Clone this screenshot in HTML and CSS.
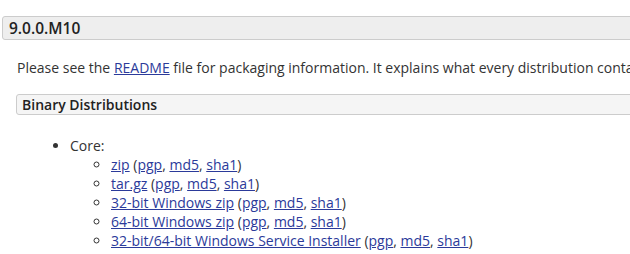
FILE: index.html
```html
<!DOCTYPE html>
<html lang="en">
<head>
    <meta charset="UTF-8">
    <meta name="viewport" content="width=device-width, initial-scale=1.0">
    <title>Apache Tomcat 9 Downloads</title>
    <link rel="stylesheet" href="styles.css">
</head>
<body>
    <div class="page">
        <h3 class="release">9.0.0.M10</h3>
        <div class="release-body">
            <p>Please see the <a href="#">README</a> file for packaging information. It explains what every distribution contains.</p>

            <h4 class="dist-title">Binary Distributions</h4>
            <ul class="dist-list">
                <li>Core:
                    <ul>
                        <li><a href="#">zip</a> (<a href="#">pgp</a>, <a href="#">md5</a>, <a href="#">sha1</a>)</li>
                        <li><a href="#">tar.gz</a> (<a href="#">pgp</a>, <a href="#">md5</a>, <a href="#">sha1</a>)</li>
                        <li><a href="#">32-bit Windows zip</a> (<a href="#">pgp</a>, <a href="#">md5</a>, <a href="#">sha1</a>)</li>
                        <li><a href="#">64-bit Windows zip</a> (<a href="#">pgp</a>, <a href="#">md5</a>, <a href="#">sha1</a>)</li>
                        <li><a href="#">32-bit/64-bit Windows Service Installer</a> (<a href="#">pgp</a>, <a href="#">md5</a>, <a href="#">sha1</a>)</li>
                    </ul>
                </li>
                <li>Full documentation:
                    <ul>
                        <li><a href="#">tar.gz</a> (<a href="#">pgp</a>, <a href="#">md5</a>, <a href="#">sha1</a>)</li>
                    </ul>
                </li>
            </ul>
        </div>
    </div>
</body>
</html>
```

FILE: styles.css
```css
html, body {
    overflow: hidden;
}
body {
    margin: 0;
    font-family: "Open Sans", sans-serif;
    font-size: 14px;
    color: #333;
    background: #fff;
}
a {
    color: #2b3a9a;
    text-decoration: underline;
}
.page {
    width: 1000px;
    padding: 16px 0 0 2px;
}
.release {
    margin: 0;
    height: 22px;
    line-height: 22px;
    padding: 0 6px;
    font-size: 15.5px;
    font-weight: 600;
    color: #222;
    background-color: #eee;
    border: 1px solid #ccc;
    border-radius: 3px;
}
.release-body {
    padding-left: 14px;
}
.release-body p {
    margin: 18px 0 17px 1px;
}
.dist-title {
    margin: 0;
    height: 19px;
    line-height: 19px;
    padding: 0 5px;
    font-size: 14px;
    font-weight: 600;
    color: #222;
    background-color: #f5f5f5;
    border: 1px solid #ccc;
    border-radius: 3px;
}
.dist-list {
    margin: 21px 0 0;
    padding-left: 54px;
}
.dist-list ul {
    margin: 0;
    padding-left: 41px;
    list-style-type: circle;
}
```
